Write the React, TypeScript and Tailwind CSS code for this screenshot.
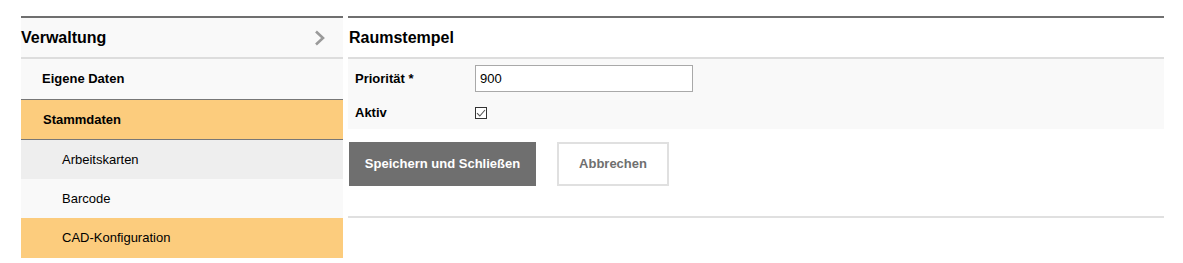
const SUB_ITEMS: { label: string; bg: string }[] = [
  { label: "Arbeitskarten", bg: "bg-[#eeeeee] h-[39px]" },
  { label: "Barcode", bg: "bg-[#f9f9f9] h-[39px]" },
  { label: "CAD-Konfiguration", bg: "bg-[#fccc7d] h-[40px]" },
];

function Chevron() {
  return (
    <svg width="12" height="16" viewBox="0 0 12 16" fill="none">
      <path d="M2 1.5 L9 8 L2 14.5" stroke="#9a9a9a" strokeWidth="2.6" />
    </svg>
  );
}

function Sidebar() {
  return (
    <aside className="w-[322px] shrink-0 border-t-2 border-[#6f6f6f] bg-[#f9f9f9]">
      <div className="h-[41px] flex items-center justify-between pr-[17px] border-b-2 border-[#dddddd]">
        <span className="text-[16px] font-bold text-black">Verwaltung</span>
        <Chevron />
      </div>
      <div className="h-[41px] flex items-center pl-[21px] border-b border-[#777777] text-[13px] font-bold text-black">
        Eigene Daten
      </div>
      <div className="h-[40px] flex items-center pl-[22px] border-b border-[#777777] bg-[#fccc7d] text-[13px] font-bold text-black">
        Stammdaten
      </div>
      {SUB_ITEMS.map((item) => (
        <div
          key={item.label}
          className={[
            "flex items-center pl-[41px] text-[13px] text-black",
            item.bg,
          ].join(" ")}
        >
          {item.label}
        </div>
      ))}
    </aside>
  );
}

function Checkbox() {
  return (
    <span className="w-[12px] h-[12px] border border-[#333333] bg-white flex items-center justify-center">
      <svg width="10" height="10" viewBox="0 0 10 10" fill="none">
        <path d="M1 5.2 L3.8 8 L9 2" stroke="#555555" strokeWidth="1.1" />
      </svg>
    </span>
  );
}

function Form() {
  return (
    <section className="flex-1 border-t-2 border-[#6f6f6f]">
      <div className="h-[41px] flex items-center pl-[1px] border-b-2 border-[#dddddd]">
        <h1 className="text-[16px] font-bold text-black">Raumstempel</h1>
      </div>

      <div className="h-[70px] bg-[#f9f9f9] pt-[6px] pl-[7px] text-[13px]">
        <div className="flex items-center">
          <label className="w-[120px] font-bold text-black">Priorität *</label>
          <div className="w-[218px] h-[27px] border border-[#a9a9a9] bg-white flex items-center px-[4px] text-black">
            900
          </div>
        </div>
        <div className="flex items-center mt-[11px]">
          <label className="w-[120px] font-bold text-black">Aktiv</label>
          <Checkbox />
        </div>
      </div>

      <div className="flex gap-[21px] pt-[13px] pl-[1px]">
        <button
          type="button"
          className="h-[44px] w-[187px] bg-[#6f6f6f] text-white text-[13px] font-bold"
        >
          Speichern und Schließen
        </button>
        <button
          type="button"
          className="h-[44px] w-[112px] border-2 border-[#e0e0e0] bg-white text-[#6f6f6f] text-[13px] font-bold"
        >
          Abbrechen
        </button>
      </div>

      <div className="mt-[30px] border-t-2 border-[#e0e0e0]" />
    </section>
  );
}

export default function App() {
  return (
    <div
      className="w-[1183px] h-[263px] overflow-hidden bg-white pt-[16px] pl-[21px] pr-[19px] flex gap-[5px] items-start"
      style={{ fontFamily: '"Liberation Sans", Arial, sans-serif' }}
    >
      <Sidebar />
      <Form />
    </div>
  );
}
